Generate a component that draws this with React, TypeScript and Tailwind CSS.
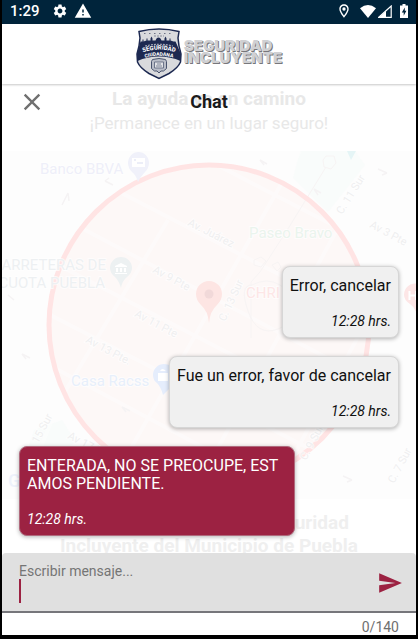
import { useState } from "react";
import {
  MdClose,
  MdOutlineLocationOn,
  MdSend,
  MdSettings,
  MdWarning,
} from "react-icons/md";

type Message = { text: string; time: string; mine: boolean };

const messages: Message[] = [
  { text: "Error, cancelar", time: "12:28 hrs.", mine: true },
  { text: "Fue un error, favor de cancelar", time: "12:28 hrs.", mine: true },
  {
    text: "ENTERADA, NO SE PREOCUPE, ESTAMOS PENDIENTE.",
    time: "12:28 hrs.",
    mine: false,
  },
];

function StatusBar() {
  return (
    <div className="flex h-6 shrink-0 items-center bg-[#00243b] px-2 pb-0.5 text-white">
      <span className="pr-3 text-[15px] leading-5 font-medium">1:29</span>
      <MdSettings size={16} />
      <MdWarning size={18} className="ml-1.5" />
      <MdOutlineLocationOn size={16} className="ml-auto" />
      <svg width="16" height="13" viewBox="0 0 16 13" className="ml-2" aria-hidden="true">
        <path d="M0 3.2Q8-3 16 3.2L8 13Z" fill="currentColor" />
      </svg>
      <svg width="14" height="13" viewBox="0 0 14 13" className="ml-0.5" aria-hidden="true">
        <path d="M.8 12.3 13.2 1v11.3Z" fill="none" stroke="currentColor" strokeWidth="1.2" />
        <path d="M1 12.5 8 6v6.5Z" fill="currentColor" />
      </svg>
      <svg width="8" height="14" viewBox="0 0 8 14" className="ml-2" aria-hidden="true">
        <path d="M0 1.5h2.5V0h3v1.5H8V14H0Z" fill="currentColor" />
        <path d="M4.8 3.5 1.8 8.4h1.9v3.4l2.7-5H4.8Z" fill="#00243b" />
      </svg>
    </div>
  );
}

function Shield() {
  return (
    <svg width="46" height="52" viewBox="0 0 46 52" aria-hidden="true">
      <defs>
        <path id="arcTop" d="M4 25.500Q23 17.500 42 25.500" />
        <path id="arcBottom" d="M8 30Q23 25.500 38 30" />
      </defs>
      <path
        d="M3 3.500Q13 1 23 1 33 1 43 3.500L42 10Q42.500 18 45 26L44.500 34Q42 40 33 45.500L23 50.500 13 45.500Q4 40 1.500 34L1 26Q3.500 18 4 10Z"
        fill="#d9dadd"
        stroke="#1d2951"
        strokeWidth="1.500"
      />
      <path
        d="M4.500 13.500h2v-2h1v2l3-1v-2h1v2h3v-2l1-2 1 2v2h3l1-2q2-2 4 0l1 2h3v-2l1-2 1 2v2h3v-2h1v2l3 1h2L45 26 44.500 33Q35 28.500 23 28.500T1.500 33L1 26Z"
        fill="#1d2951"
      />
      <path d="M8 5.500h30" stroke="#6f7486" strokeWidth="1" strokeDasharray="1.500 3.500" />
      <path d="M18 8h10" stroke="#8a8e9c" strokeWidth="1" strokeDasharray="2 1" />
      <path d="M9 18Q23 14.500 37 18" fill="none" stroke="#a5a9ba" strokeWidth="1.200" strokeDasharray="2 1" />
      <text fontSize="6" fontWeight="800" fill="#fff" textAnchor="middle">
        <textPath href="#arcTop" startOffset="50%">SEGURIDAD</textPath>
      </text>
      <text fontSize="5" fontWeight="800" fill="#fff" textAnchor="middle">
        <textPath href="#arcBottom" startOffset="50%">CIUDADANA</textPath>
      </text>
      <path d="M16.500 31.500q6.500-2 13 0l1 2v7l-3 2.500h-2.500l-2 2-2-2h-2.500l-3-2.500v-7Z" fill="#b9bdc8" stroke="#4a546f" strokeWidth="1" />
      <path d="M18.500 34h9v6h-9Z" fill="#e2e3e7" stroke="#6d758a" strokeWidth="1" />
      <path d="M20 38h6M21 36h4" stroke="#7d8498" strokeWidth="1" />
    </svg>
  );
}

function Header() {
  return (
    <header className="z-10 flex h-15 shrink-0 items-center justify-center gap-0.5 bg-white shadow-[0_1px_2px_rgba(0,0,0,0.22)]">
      <Shield />
      <h1 className="pb-1 font-[Inter,sans-serif] text-[15px] leading-3 font-black text-[#cfd0d3] [text-shadow:1px_1px_0_#77777b]">
        <span className="block">SEGURIDAD</span>
        <span className="block">INCLUYENTE</span>
      </h1>
    </header>
  );
}

function MapPicture() {
  return (
    <svg
      className="block h-[348px] w-full"
      viewBox="2 151 414 348"
      preserveAspectRatio="xMidYMid slice"
      aria-hidden="true"
    >
      <rect x="2" y="151" width="414" height="348" fill="#fdfdfd" />
      <path d="M300 151 355 151 365 165 328 212 293 178Z" fill="#f9fcfb" />
      <path d="M34 430 62 420 76 442 60 452 28 448Z" fill="#f9fcfb" />
      <circle cx="209" cy="325" r="160" fill="#fdf8f7" />
      <g stroke="#ffffff" strokeWidth="4" fill="none" opacity="0.4">
        <path d="M40 151 416 345M2 186 416 405M2 236 416 450M2 290 370 480M2 340 300 499M190 151 416 268" />
        <path d="M90 151 2 300M168 220 60 400 20 499M300 151 130 450M380 151 190 499M416 230 270 499" />
      </g>
      <g stroke="#f7f4f4" strokeWidth="1" fill="none">
        <path d="m326 167-40 65-26 40-9 10v56M252 285q15-8 28 0t16 22-18 22-30-18 4-26" />
        <path d="m326 156 8 0 2 7-5 6-7-2-1-7ZM254 260l7-3 5 4-5 6-7-2Zm18 5 6-3 3 5-4 4Z" />
      </g>
      <g stroke="#f5f3f4" strokeWidth="1.500" fill="none">
        <path d="m260 160 7 4m-7-4 4 5m50 24 7 4m-7-4 4 6m69-22-9-4m9 4-5 2M22 354l8 4m-8-4 4 5m96 48 8 4m-8-4 4 5m226 68-9-4m9 4-5 2M68 193l-6 12m6-12 1 8M105 181l8 4m-8-4 4-3m-101 117 6 5" />
      </g>
      <circle cx="209" cy="325" r="160" fill="none" stroke="#ffe4e4" strokeWidth="5" />
      <g fontSize="16" stroke="#fff" strokeWidth="2" strokeOpacity="0.7" paintOrder="stroke">
        <text x="40" y="174" fontSize="15" fill="#eeeff9">Banco BBVA</text>
        <text x="249" y="238" fontSize="15" fill="#eaf4ed">Paseo Bravo</text>
        <text x="106" y="270" fontSize="15" textAnchor="end" fill="#edf0f2">ARRETERAS DE</text>
        <text x="105" y="288" fontSize="15" textAnchor="end" fill="#edf0f2">CUOTA PUEBLA</text>
        <text x="246" y="298" fontSize="15" fill="#fde6e6">CHRI</text>
        <text x="71" y="386" fontSize="15" fill="#e7effb">Casa Racss</text>
        <g fontSize="11" fill="#efeff0">
          <text transform="translate(187 225) rotate(27)">Av. Juárez</text>
          <text transform="translate(369 227) rotate(28)">Av 3 Pte</text>
          <text transform="translate(152 272) rotate(28)">Av 9 Pte</text>
          <text transform="translate(134 316) rotate(28)">Av 11 Pte</text>
          <text transform="translate(85 342) rotate(28)">Av 13 Pte.</text>
          <text transform="translate(67 438) rotate(28)">Av 17 Pte</text>
          <text transform="translate(342 215) rotate(-58)">C. 11 Sur</text>
          <text transform="translate(225 322) rotate(-65)">C. 13 Sur</text>
          <text transform="translate(38 444) rotate(-62)">15 Sur</text>
          <text transform="translate(306 461) rotate(-62)">C. 9 Sur</text>
          <text transform="translate(394 484) rotate(-62)">C. 7 Sur</text>
        </g>
      </g>
      <path d="M138 182q-2-7-6-10-4-4-4-9a10.500 11 0 0 1 21 0q0 5-4 9t-7 10Z" fill="#f0f1fa" />
      <path d="M132 158h13v9h-13Z" fill="#fff" />
      <path d="M134 160h2M137 163h6" stroke="#eceef8" strokeWidth="2" />
      <path d="M121 288q-2-7-6-11-5-4-5-9a11 11 0 0 1 22 0q0 5-5 9t-6 11Z" fill="#edf1f2" />
      <path d="m115 266 6-3 6 3v1h-12Zm1 2h2v4h-2Zm4 0h2v4h-2Zm4 0h2v4h-2Zm-9 5h12v1h-12Z" fill="#fff" />
      <path d="M347 151h9l-5 9Z" fill="#e5f5f6" />
      <path d="M163 395q-2-8-6-12-4-3-4-8a11 11 0 0 1 22 0v8Z" fill="#e5edfc" />
      <path d="M158 373h10v8h-10Zm2-2q2-4 6 0" fill="#fff" />
      <path d="M209 323q-1-12-8-18-5-5-5-11a13 13 0 0 1 26 0q0 6-5 11-7 6-8 18Z" fill="#fde5e3" />
      <circle cx="209" cy="294" r="4.500" fill="#f1d9d9" />
      <path d="M418 318q-2-10-8-14-6-4-6-9a11 11 0 0 1 14-11Z" fill="#fde6e6" />
      <path d="M409.500 291v9M409.500 295.500h7M416 291v9" stroke="#fff" strokeWidth="2" />
      <text x="8" y="487" fontSize="18" fontWeight="500" fill="#eef2fb">G</text>
    </svg>
  );
}

/* The help screen stays faintly visible behind the conversation. */
function HelpScreen() {
  return (
    <div className="absolute inset-0 overflow-hidden pt-[3px] text-center" aria-hidden="true">
      <p className="text-[19px] leading-6 font-bold text-[#e8e8e8]">La ayuda va en camino</p>
      <p className="pb-4 text-[17px] leading-6 text-[#e8e8e8]">¡Permanece en un lugar seguro!</p>
      <MapPicture />
      <p className="px-8 pt-3 text-[19px] leading-[23px] font-bold text-[#efefef]">
        Gracias por confiar en Seguridad
        <br />
        Incluyente del Municipio de Puebla
      </p>
    </div>
  );
}

function Bubble({ text, time, mine }: Message) {
  return (
    <li
      className={
        "max-w-[276px] rounded-lg border px-[7px] pt-2.5 pb-2 shadow-[0_1px_4px_rgba(0,0,0,0.3)] " +
        (mine
          ? "self-end border-[#d6d6d6] bg-[#f0f0f0] text-[#111111]"
          : "self-start border-[#b06a7d] bg-[#9c2242] text-white")
      }
    >
      <p className={"text-base leading-[18px] break-all " + (mine ? "text-right" : "text-left")}>{text}</p>
      <time className={"mt-[18px] block text-sm leading-4 italic " + (mine ? "text-right" : "text-left")}>
        {time}
      </time>
    </li>
  );
}

function Composer() {
  const [draft, setDraft] = useState("");
  return (
    <form className="shrink-0 bg-white" onSubmit={(e) => e.preventDefault()}>
      <div className="flex h-15 items-center rounded-t border-b-2 border-[#76767b] bg-[#e0e0e0] pt-0.5 pr-[5px] pl-[17px]">
        <div className="flex-1">
          <label htmlFor="draft" className="block text-sm leading-4 text-[#757575]">
            Escribir mensaje...
          </label>
          <div className="flex h-6 items-center">
            {draft === "" && <span className="h-6 w-0.5 bg-[#9c2242]" />}
            <input
              id="draft"
              maxLength={140}
              value={draft}
              onChange={(e) => setDraft(e.target.value)}
              className="h-6 w-full bg-transparent text-base caret-[#9c2242] outline-none"
            />
          </div>
        </div>
        <button type="submit" aria-label="Enviar" className="px-2 text-[#9c2242]">
          <MdSend size={26} />
        </button>
      </div>
      <p className="px-[17px] pt-1.5 text-right text-sm leading-4 text-[#6f6f6f]">{draft.length}/140</p>
    </form>
  );
}

export default function App() {
  return (
    <div className="flex min-h-screen flex-col border-x-2 border-b-4 border-black bg-white font-[Roboto,sans-serif]">
      <StatusBar />
      <Header />
      <main className="relative flex flex-1 flex-col">
        <HelpScreen />
        <section className="relative flex flex-1 flex-col">
          <div className="grid grid-cols-[1fr_auto_1fr] items-center px-4 pt-1">
            <button type="button" aria-label="Cerrar" className="justify-self-start text-[#707070]">
              <MdClose size={28} />
            </button>
            <h2 className="text-lg leading-7 font-bold text-[#1b1b1b]">Chat</h2>
          </div>
          <ul className="flex flex-1 flex-col justify-end gap-[18px] px-[17px] pb-[17px]">
            {messages.map((m) => (
              <Bubble key={m.text} {...m} />
            ))}
          </ul>
        </section>
      </main>
      <Composer />
    </div>
  );
}
